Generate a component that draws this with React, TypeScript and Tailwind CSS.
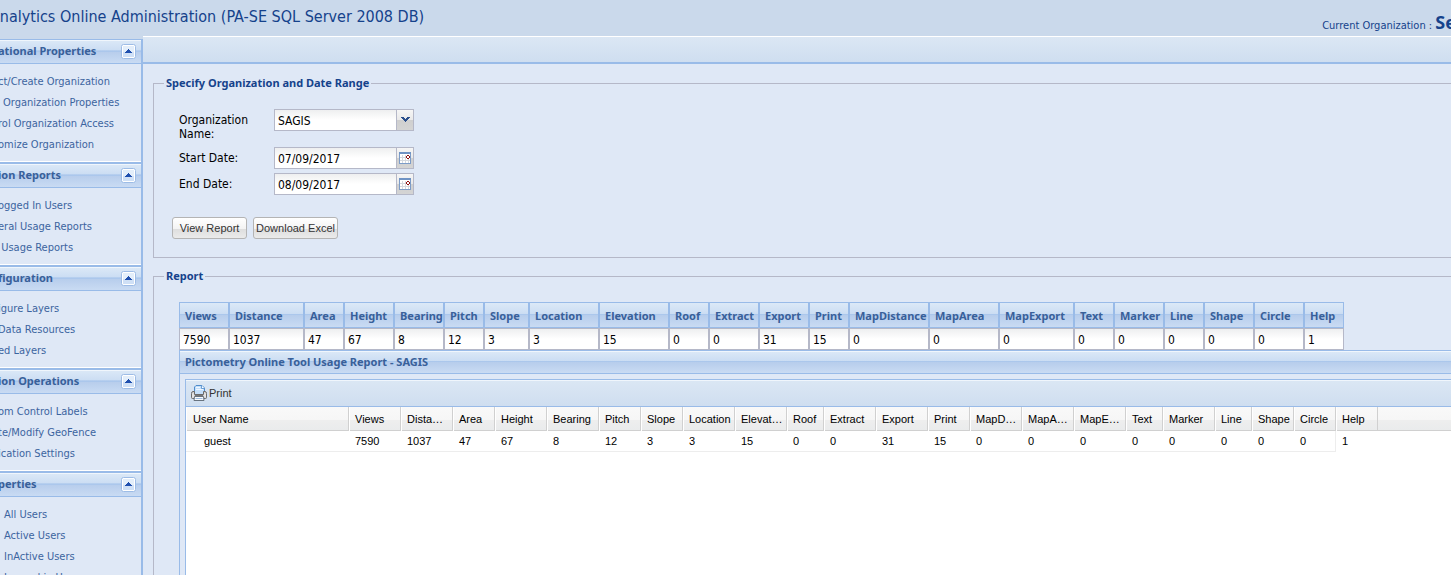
import React, { useState } from "react";

interface NavPanel {
  title: string;
  indent: boolean;
  items: string[];
}

const NAV_PANELS: NavPanel[] = [
  {
    title: "ational Properties",
    indent: false,
    items: [
      "ct/Create Organization",
      "y Organization Properties",
      "rol Organization Access",
      "omize Organization",
    ],
  },
  {
    title: "ion Reports",
    indent: false,
    items: ["ogged In Users", "eral Usage Reports", "r Usage Reports"],
  },
  {
    title: "figuration",
    indent: false,
    items: ["igure Layers", "Data Resources", "ed Layers"],
  },
  {
    title: "ion Operations",
    indent: false,
    items: ["om Control Labels", "te/Modify GeoFence", "ication Settings"],
  },
  {
    title: "perties",
    indent: true,
    items: ["All Users", "Active Users", "InActive Users", "Logged in Users"],
  },
];

// summary = width in the totals table, grid = width in the usage grid
const COLUMNS = [
  { label: "Views", value: 7590, summary: 50, grid: 52 },
  { label: "Distance", value: 1037, summary: 75, grid: 52 },
  { label: "Area", value: 47, summary: 40, grid: 42 },
  { label: "Height", value: 67, summary: 50, grid: 52 },
  { label: "Bearing", value: 8, summary: 50, grid: 52 },
  { label: "Pitch", value: 12, summary: 40, grid: 42 },
  { label: "Slope", value: 3, summary: 45, grid: 42 },
  { label: "Location", value: 3, summary: 70, grid: 52 },
  { label: "Elevation", value: 15, summary: 70, grid: 52 },
  { label: "Roof", value: 0, summary: 40, grid: 37 },
  { label: "Extract", value: 0, summary: 50, grid: 52 },
  { label: "Export", value: 31, summary: 50, grid: 52 },
  { label: "Print", value: 15, summary: 40, grid: 42 },
  { label: "MapDistance", value: 0, summary: 80, grid: 52 },
  { label: "MapArea", value: 0, summary: 70, grid: 52 },
  { label: "MapExport", value: 0, summary: 75, grid: 52 },
  { label: "Text", value: 0, summary: 40, grid: 37 },
  { label: "Marker", value: 0, summary: 50, grid: 52 },
  { label: "Line", value: 0, summary: 40, grid: 37 },
  { label: "Shape", value: 0, summary: 50, grid: 42 },
  { label: "Circle", value: 0, summary: 50, grid: 42 },
  { label: "Help", value: 1, summary: 40, grid: 42 },
];

const HEADER_BG =
  "bg-[linear-gradient(#dce9f7_0%,#cbddf3_45%,#abc7ec_46%,#abc7ec_50%,#b7cdec_51%,#c9dbf3_100%)]";
const FIELD_BG = "bg-[linear-gradient(#eeeff0_0px,#ffffff_10px)]";
const BOLD = "font-['Noto_Sans',sans-serif] font-bold";

const CollapseIcon = () => (
  <svg width="15" height="15" viewBox="0 0 15 15">
    <rect x="0.5" y="0.5" width="14" height="14" rx="2" fill="#fff" stroke="#9dbce6" />
    <rect x="2" y="2" width="11" height="11" fill="#e3eefa" />
    <rect x="2" y="8" width="11" height="5" fill="#cfe0f6" />
    <path d="M7 5h1v1h1v1h1v1h1v1H4V8h1V7h1V6h1z" fill="#1f4fae" />
  </svg>
);

const CalendarIcon = () => (
  <svg width="12" height="12" viewBox="0 0 12 12" shapeRendering="crispEdges">
    <rect x="0.5" y="0.5" width="11" height="11" fill="#fff" stroke="#7c9cc8" />
    <rect width="12" height="2" fill="#6f93c4" />
    <path d="M3.5 3v8M6.5 3v8M9.5 7v4M1 5.5h6M1 8.5h10" stroke="#d5d9df" fill="none" />
    <path d="M8 3h2v1h1v2h-1v1H8V6H7V4h1z" fill="#8e1010" />
    <rect x="8" y="4" width="2" height="2" fill="#fff" />
  </svg>
);

const PrinterIcon = () => (
  <svg width="16" height="16" viewBox="0 0 16 16">
    <path d="M3.5 9V2L5 0.5h6L13.5 3v6" fill="#c4dffa" stroke="#4f8ccb" />
    <path d="M10.5 0.5V3.5h3" fill="#fff" stroke="#4f8ccb" strokeWidth="0.8" />
    <path d="M5 2.5h4M5 4.5h7" stroke="#eef6ff" />
    <path d="M2 6.5h1.5v3h9v-3H14q1.5 0 1.500 2v4q0 1-1 1h-13q-1 0-1-1v-4q0-2 1.500-2z" fill="#d2d2d2" stroke="#6b6b6b" />
    <path d="M2 8.500v4M14 8.500v4" stroke="#f7f7f7" />
    <path d="M4 10.500h8" stroke="#777" />
    <path d="M3.500 11.500h9l0.500 4h-10z" fill="#f8fafc" stroke="#68737f" />
    <path d="M4.500 13.500h7" stroke="#9dbde0" />
  </svg>
);

const Sidebar: React.FC = () => {
  const [closed, setClosed] = useState<string[]>([]);

  const toggle = (title: string) =>
    setClosed((prev) =>
      prev.includes(title) ? prev.filter((t) => t !== title) : [...prev, title],
    );

  // labels run off the left edge, lone leading letters are almost gone
  const linkOffset = (item: string, indent: boolean) => {
    if (indent) return "ml-1";
    return /^[yr] /.test(item) ? "-ml-[6px]" : "-ml-[2px]";
  };

  return (
    <aside className="mt-[3px] w-[143px] shrink-0 overflow-hidden border-r-2 border-[#99bbe8] bg-[#dfe8f6]">
      {NAV_PANELS.map((panel) => (
        <section key={panel.title} className="border-y border-[#99bbe8]">
          <div
            className={`flex h-6 items-center justify-between border-b border-[#99bbe8] pr-[5px] shadow-[inset_0_1px_0_#f0f6fc] ${HEADER_BG}`}
          >
            <h2 className={`-ml-[2px] whitespace-nowrap text-[11px] text-[#38609a] ${BOLD}`}>
              {panel.title}
            </h2>
            <button type="button" aria-label="Collapse" onClick={() => toggle(panel.title)}>
              <CollapseIcon />
            </button>
          </div>
          {!closed.includes(panel.title) && (
            <ul className="border-b border-white pt-[7px] pb-[6px]">
              {panel.items.map((item) => (
                <li key={item}>
                  <a
                    href="#"
                    className={`block whitespace-nowrap text-[11px] leading-[21px] text-[#3c649f] ${linkOffset(item, panel.indent)}`}
                  >
                    {item}
                  </a>
                </li>
              ))}
            </ul>
          )}
        </section>
      ))}
    </aside>
  );
};

const TRIGGER =
  "flex w-[18px] items-center justify-center border border-[#b5b8c8] bg-[linear-gradient(#f6f6f6_0%,#e9e9e9_50%,#cfcfcf_51%,#d4d4d4_100%)]";

const DateField: React.FC<{ id: string; label: string; initial: string }> = ({
  id,
  label,
  initial,
}) => (
  <div className="flex h-[26px] items-start">
    <label htmlFor={id} className="w-[95px] pt-1 leading-[14px]">
      {label}
    </label>
    <div className="flex h-[22px]">
      <input
        id={id}
        defaultValue={initial}
        className={`w-[122px] border border-r-0 border-[#b5b8c8] px-[3px] pt-[2px] text-[12px] ${FIELD_BG}`}
      />
      <button type="button" aria-label={`Pick ${label}`} className={TRIGGER}>
        <CalendarIcon />
      </button>
    </div>
  </div>
);

const ToolButton: React.FC<{ className: string; children: React.ReactNode }> = ({
  className,
  children,
}) => (
  <button
    type="button"
    className={`h-[22px] whitespace-nowrap rounded-[3px] border border-[#b4b4b4] bg-[linear-gradient(#ffffff_0%,#f3f3f3_55%,#dedede_56%,#ebebeb_100%)] ${className}`}
  >
    {children}
  </button>
);

const ReportForm: React.FC = () => (
  <fieldset className="border border-r-0 border-[#b5b8c8] pb-[18px] pl-[18px]">
    <legend className={`-ml-2 px-[2px] text-[11px] leading-[14px] text-[#15428b] ${BOLD}`}>
      Specify Organization and Date Range
    </legend>
    <div className="pt-[19px] pl-[7px] text-[12px] text-black">
      <div className="flex h-[38px] items-start">
        <label htmlFor="org" className="w-[95px] pt-1 leading-[14px]">
          Organization
          <br />
          Name:
        </label>
        <div className="relative">
          <select
            id="org"
            className={`h-[22px] w-[140px] appearance-none border border-[#b5b8c8] px-[3px] pt-[2px] text-[12px] ${FIELD_BG}`}
          >
            <option>SAGIS</option>
          </select>
          <span className={`pointer-events-none absolute inset-y-0 right-0 ${TRIGGER}`}>
            <svg width="9" height="6" viewBox="0 0 9 6">
              <path d="M0 0h3v1h1v1h1V1h1V0h3v1H8v1H7v1H6v1H5v1H4V4H3V3H2V2H1V1H0z" fill="#2b4f8c" />
            </svg>
          </span>
        </div>
      </div>
      <DateField id="start" label="Start Date:" initial="07/09/2017" />
      <DateField id="end" label="End Date:" initial="08/09/2017" />
    </div>
    <div className="mt-[18px] flex gap-[6px] font-['Liberation_Sans',Arial,sans-serif] text-[11px] text-[#333]">
      <ToolButton className="w-[75px]">View Report</ToolButton>
      <ToolButton className="w-[85px]">Download Excel</ToolButton>
    </div>
  </fieldset>
);

const SummaryTable: React.FC = () => (
  <table className="w-[1165px] table-fixed border-separate border-spacing-0 text-left">
    <colgroup>
      {COLUMNS.map((c) => (
        <col key={c.label} style={{ width: c.summary }} />
      ))}
    </colgroup>
    <thead>
      <tr>
        {COLUMNS.map((c) => (
          <th
            key={c.label}
            className={`h-[26px] whitespace-nowrap border border-[#99bbe8] p-0 pt-[2px] pl-[5px] text-[11px] text-[#38609a] ${HEADER_BG} ${BOLD}`}
          >
            {c.label}
          </th>
        ))}
      </tr>
    </thead>
    <tbody>
      <tr>
        {COLUMNS.map((c) => (
          <td
            key={c.label}
            className={`h-[22px] border border-[#b5b8c8] p-0 pt-[2px] pl-[3px] text-[12px] leading-[14px] text-black ${FIELD_BG}`}
          >
            {c.value}
          </td>
        ))}
      </tr>
    </tbody>
  </table>
);

const GridCols = () => (
  <colgroup>
    <col className="w-[163px]" />
    {COLUMNS.map((c) => (
      <col key={c.label} style={{ width: c.grid }} />
    ))}
  </colgroup>
);

const UsageGrid: React.FC = () => (
  <div className="flex-1 bg-white font-['Liberation_Sans',Arial,sans-serif] text-[11px] text-black">
    <div className="bg-[linear-gradient(#f9f9f9_0%,#f6f6f6_55%,#eeeeee_56%,#e9ebec_100%)] shadow-[inset_0_-1px_0_#d0d0d0]">
      <table className="w-[1192px] table-fixed border-separate border-spacing-0 text-left">
        <GridCols />
        <thead>
          <tr>
            {["User Name", ...COLUMNS.map((c) => c.label)].map((label) => (
              <th
                key={label}
                className="h-6 truncate border-r border-[#d0d0d0] p-0 pr-[3px] pl-[6px] font-normal shadow-[inset_1px_0_0_#ffffff] first:pl-[7px]"
              >
                {label}
              </th>
            ))}
          </tr>
        </thead>
      </table>
    </div>
    <table className="w-[1192px] table-fixed border-separate border-spacing-0 text-left">
      <GridCols />
      <tbody>
        <tr>
          <td className="h-[21px] border-b border-[#ededed] p-0 pl-[18px]">guest</td>
          {COLUMNS.map((c) => (
            <td
              key={c.label}
              className={`h-[21px] border-[#ededed] p-0 pl-[6px] ${c.label === "Help" ? "" : "border-b"} ${c.label === "Circle" ? "border-r" : ""}`}
            >
              {c.value}
            </td>
          ))}
        </tr>
      </tbody>
    </table>
  </div>
);

const Report: React.FC = () => (
  <fieldset className="mt-[11px] flex flex-1 flex-col border border-r-0 border-b-0 border-[#b5b8c8] pl-[25px]">
    <legend className={`-ml-[15px] px-[2px] text-[11px] leading-[14px] text-[#15428b] ${BOLD}`}>
      Report
    </legend>
    <div className="flex flex-1 flex-col pt-[19px]">
      <SummaryTable />
      <div className="flex flex-1 flex-col border-t border-l border-[#99bbe8]">
        <h2
          className={`h-[23px] border-b border-[#99bbe8] pl-[5px] text-[11px] leading-[22px] text-[#38609a] shadow-[inset_0_1px_0_#f0f6fc] ${HEADER_BG} ${BOLD}`}
        >
          Pictometry Online Tool Usage Report - SAGIS
        </h2>
        <div className="mt-[5px] ml-[5px] flex flex-1 flex-col border-t border-l border-[#99bbe8]">
          <div className="flex h-[27px] items-center border-b border-[#99bbe8] bg-[linear-gradient(#dbe7f4,#cfdef0)] pl-[5px] shadow-[inset_0_1px_0_#f0f6fc]">
            <button
              type="button"
              className="flex items-center gap-[2px] font-['Liberation_Sans',Arial,sans-serif] text-[11px] text-[#333]"
            >
              <PrinterIcon />
              Print
            </button>
          </div>
          <UsageGrid />
        </div>
      </div>
    </div>
  </fieldset>
);

export default function App() {
  return (
    <div className="flex h-screen flex-col overflow-hidden bg-[#cad9eb] font-['DejaVu_Sans_Condensed','Noto_Sans',sans-serif]">
      <header className="flex h-9 shrink-0 items-start justify-between whitespace-nowrap text-[#15428b]">
        <h1 className="-ml-[10px] pt-[5px] text-[16px] leading-6">
          Analytics Online Administration (PA-SE SQL Server 2008 DB)
        </h1>
        <p className="-mr-[5px] pt-3 text-[11px] leading-5">
          Current Organization :{" "}
          <span className={`text-[18px] ${BOLD}`}>Se</span>
        </p>
      </header>
      <div className="flex min-h-0 flex-1">
        <Sidebar />
        <main className="flex min-w-0 flex-1 flex-col overflow-hidden bg-[#dfe8f6]">
          <div className="h-7 shrink-0 border-t border-b-2 border-t-white border-b-[#99bbe8] bg-[linear-gradient(#dbe7f4,#cfdef0)]" />
          <div className="flex min-h-0 flex-1 flex-col pt-3 pl-[10px]">
            <ReportForm />
            <Report />
          </div>
        </main>
      </div>
    </div>
  );
}
